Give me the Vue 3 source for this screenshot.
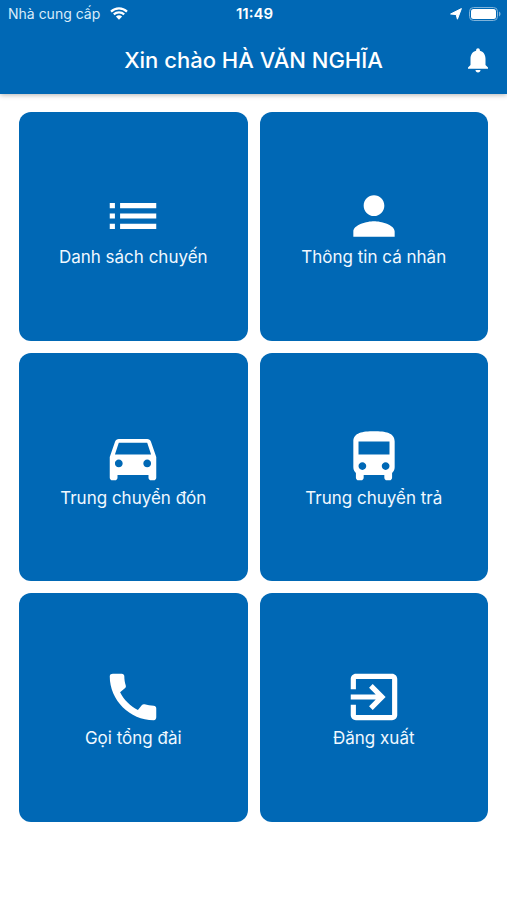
<template>
  <div class="home">
    <header class="header">
      <div class="status-bar">
        <div class="carrier">
          <span>Nhà cung cấp</span>
          <svg class="wifi" viewBox="0 0 18 13" aria-hidden="true">
            <path d="M1 4.6a11.6 11.6 0 0 1 16 0M3.8 7.4a7.6 7.6 0 0 1 10.4 0" />
            <path class="solid" d="M9 12.8 5.9 9.6a4.5 4.5 0 0 1 6.2 0z" />
          </svg>
        </div>
        <span class="clock">11:49</span>
        <div class="indicators">
          <svg class="location" viewBox="0 0 12 12" aria-hidden="true">
            <path d="M11.4.6 7.4 11.2 6.2 6.6.6 6z" />
          </svg>
          <svg class="battery" viewBox="0 0 32 14" aria-hidden="true">
            <rect class="shell" x="0.5" y="0.5" width="28" height="13" rx="4" />
            <rect x="2" y="2" width="25" height="10" rx="2.5" />
            <path class="tip" d="M30 4.6c2 .8 2 4 0 4.8z" />
          </svg>
        </div>
      </div>
      <div class="app-bar">
        <h1 class="title">Xin chào HÀ VĂN NGHĨA</h1>
        <button type="button" class="bell" aria-label="Thông báo">
          <svg viewBox="0 0 24 24">
            <path d="M12 22c1.1 0 2-.9 2-2h-4c0 1.1.89 2 2 2zm6-6v-5c0-3.07-1.64-5.64-4.5-6.32V4c0-.83-.67-1.5-1.5-1.5s-1.5.67-1.5 1.5v.68C7.63 5.36 6 7.92 6 11v5l-2 2v1h16v-1l-2-2z" />
          </svg>
        </button>
      </div>
    </header>

    <main class="menu">
      <button v-for="item in items" :key="item.label" type="button" class="card">
        <svg class="card-icon" viewBox="0 0 24 24" aria-hidden="true">
          <path :d="item.icon" />
        </svg>
        <span class="card-label">{{ item.label }}</span>
      </button>
    </main>
  </div>
</template>

<script setup>
const items = [
  {
    label: 'Danh sách chuyến',
    icon: 'M3 13h2v-2H3v2zm0 4h2v-2H3v2zm0-8h2V7H3v2zm4 4h14v-2H7v2zm0 4h14v-2H7v2zM7 7v2h14V7H7z'
  },
  {
    label: 'Thông tin cá nhân',
    icon: 'M12 12c2.21 0 4-1.79 4-4s-1.79-4-4-4-4 1.79-4 4 1.79 4 4 4zm0 2c-2.67 0-8 1.34-8 4v2h16v-2c0-2.66-5.33-4-8-4z'
  },
  {
    label: 'Trung chuyển đón',
    icon: 'M18.92 6.01C18.72 5.42 18.16 5 17.5 5h-11c-.66 0-1.21.42-1.42 1.01L3 12v8c0 .55.45 1 1 1h1c.55 0 1-.45 1-1v-1h12v1c0 .55.45 1 1 1h1c.55 0 1-.45 1-1v-8l-2.08-5.99zM6.5 16c-.83 0-1.5-.67-1.5-1.5S5.67 13 6.5 13s1.5.67 1.5 1.5S7.33 16 6.5 16zm11 0c-.83 0-1.5-.67-1.5-1.5s.67-1.5 1.5-1.5 1.5.67 1.5 1.5-.67 1.5-1.5 1.5zM5 11l1.5-4.5h11L19 11H5z'
  },
  {
    label: 'Trung chuyển trả',
    icon: 'M4 16c0 .88.39 1.67 1 2.22V20c0 .55.45 1 1 1h1c.55 0 1-.45 1-1v-1h8v1c0 .55.45 1 1 1h1c.55 0 1-.45 1-1v-1.78c.61-.55 1-1.34 1-2.22V6c0-3.5-3.58-4-8-4s-8 .5-8 4v10zm3.5 1c-.83 0-1.5-.67-1.5-1.5S6.67 14 7.5 14s1.5.67 1.5 1.5S8.33 17 7.5 17zm9 0c-.83 0-1.5-.67-1.5-1.5s.67-1.5 1.5-1.5 1.5.67 1.5 1.5-.67 1.5-1.5 1.5zm1.5-6H6V6h12v5z'
  },
  {
    label: 'Gọi tổng đài',
    icon: 'M20.01 15.38c-1.23 0-2.42-.2-3.53-.56-.35-.12-.74-.03-1.01.24l-1.57 1.97c-2.83-1.35-5.48-3.9-6.89-6.83l1.95-1.66c.27-.28.35-.67.24-1.02-.37-1.11-.56-2.3-.56-3.53 0-.54-.45-.99-.99-.99H4.19C3.65 3 3 3.24 3 3.99 3 13.28 10.73 21 20.01 21c.71 0 .99-.63.99-1.18v-3.45c0-.54-.45-.99-.99-.99z'
  },
  {
    label: 'Đăng xuất',
    icon: 'M10.09 15.59 11.5 17l5-5-5-5-1.41 1.41L12.67 11H3v2h9.67l-2.58 2.59zM19 3H5c-1.11 0-2 .9-2 2v4h2V5h14v14H5v-4H3v4c0 1.1.89 2 2 2h14c1.1 0 2-.9 2-2V5c0-1.1-.9-2-2-2z'
  }
]
</script>

<style>
body {
  background: #ffffff;
}
</style>

<style scoped>
.home {
  min-height: 100vh;
  font-family: Inter, "Noto Sans", sans-serif;
  color: #ffffff;
}

.header {
  padding-bottom: 2px;
  background: #0068b5;
  box-shadow: 0 1px 5px rgba(0, 0, 0, 0.3);
}

.status-bar {
  display: grid;
  grid-template-columns: 1fr auto 1fr;
  align-items: center;
  height: 27px;
  padding: 0 6px 0 8px;
  font-size: 14px;
}

.carrier {
  display: flex;
  align-items: center;
  gap: 10px;
  color: #d9ecfa;
}

.wifi {
  width: 18px;
  height: 13px;
  fill: none;
  stroke: #ffffff;
  stroke-width: 2.2;
}

.wifi .solid {
  fill: #ffffff;
  stroke: none;
}

.clock {
  font-size: 15px;
  font-weight: 600;
}

.indicators {
  display: flex;
  align-items: center;
  justify-content: flex-end;
  gap: 7px;
  fill: #ffffff;
}

.location {
  width: 12px;
  height: 12px;
  stroke: #ffffff;
  stroke-width: 1;
  stroke-linejoin: round;
}

.battery {
  width: 32px;
  height: 14px;
}

.battery .shell {
  fill: none;
  stroke: #7fb3da;
}

.battery .tip {
  fill: #7fb3da;
}

.app-bar {
  display: grid;
  grid-template-columns: 30px 1fr 30px;
  align-items: center;
  height: 65px;
  padding: 0 14px;
}

.title {
  grid-column: 2;
  margin: 0;
  font-size: 22px;
  font-weight: 500;
  line-height: 32px;
  text-align: center;
}

.bell {
  width: 30px;
  height: 30px;
  padding: 0;
  border: none;
  background: none;
  cursor: pointer;
}

.bell svg {
  display: block;
  fill: #ffffff;
}

.menu {
  display: grid;
  grid-template-columns: 1fr 1fr;
  gap: 12px;
  padding: 18px 19px;
}

.card {
  display: flex;
  flex-direction: column;
  align-items: center;
  justify-content: center;
  aspect-ratio: 1;
  padding: 0;
  border: none;
  border-radius: 12px;
  background: #0068b5;
  color: #f0f8ff;
  font-family: inherit;
  cursor: pointer;
}

.card-icon {
  width: 62px;
  height: 62px;
  fill: #ffffff;
}

.card-label {
  font-size: 17px;
  line-height: 20px;
}
</style>
